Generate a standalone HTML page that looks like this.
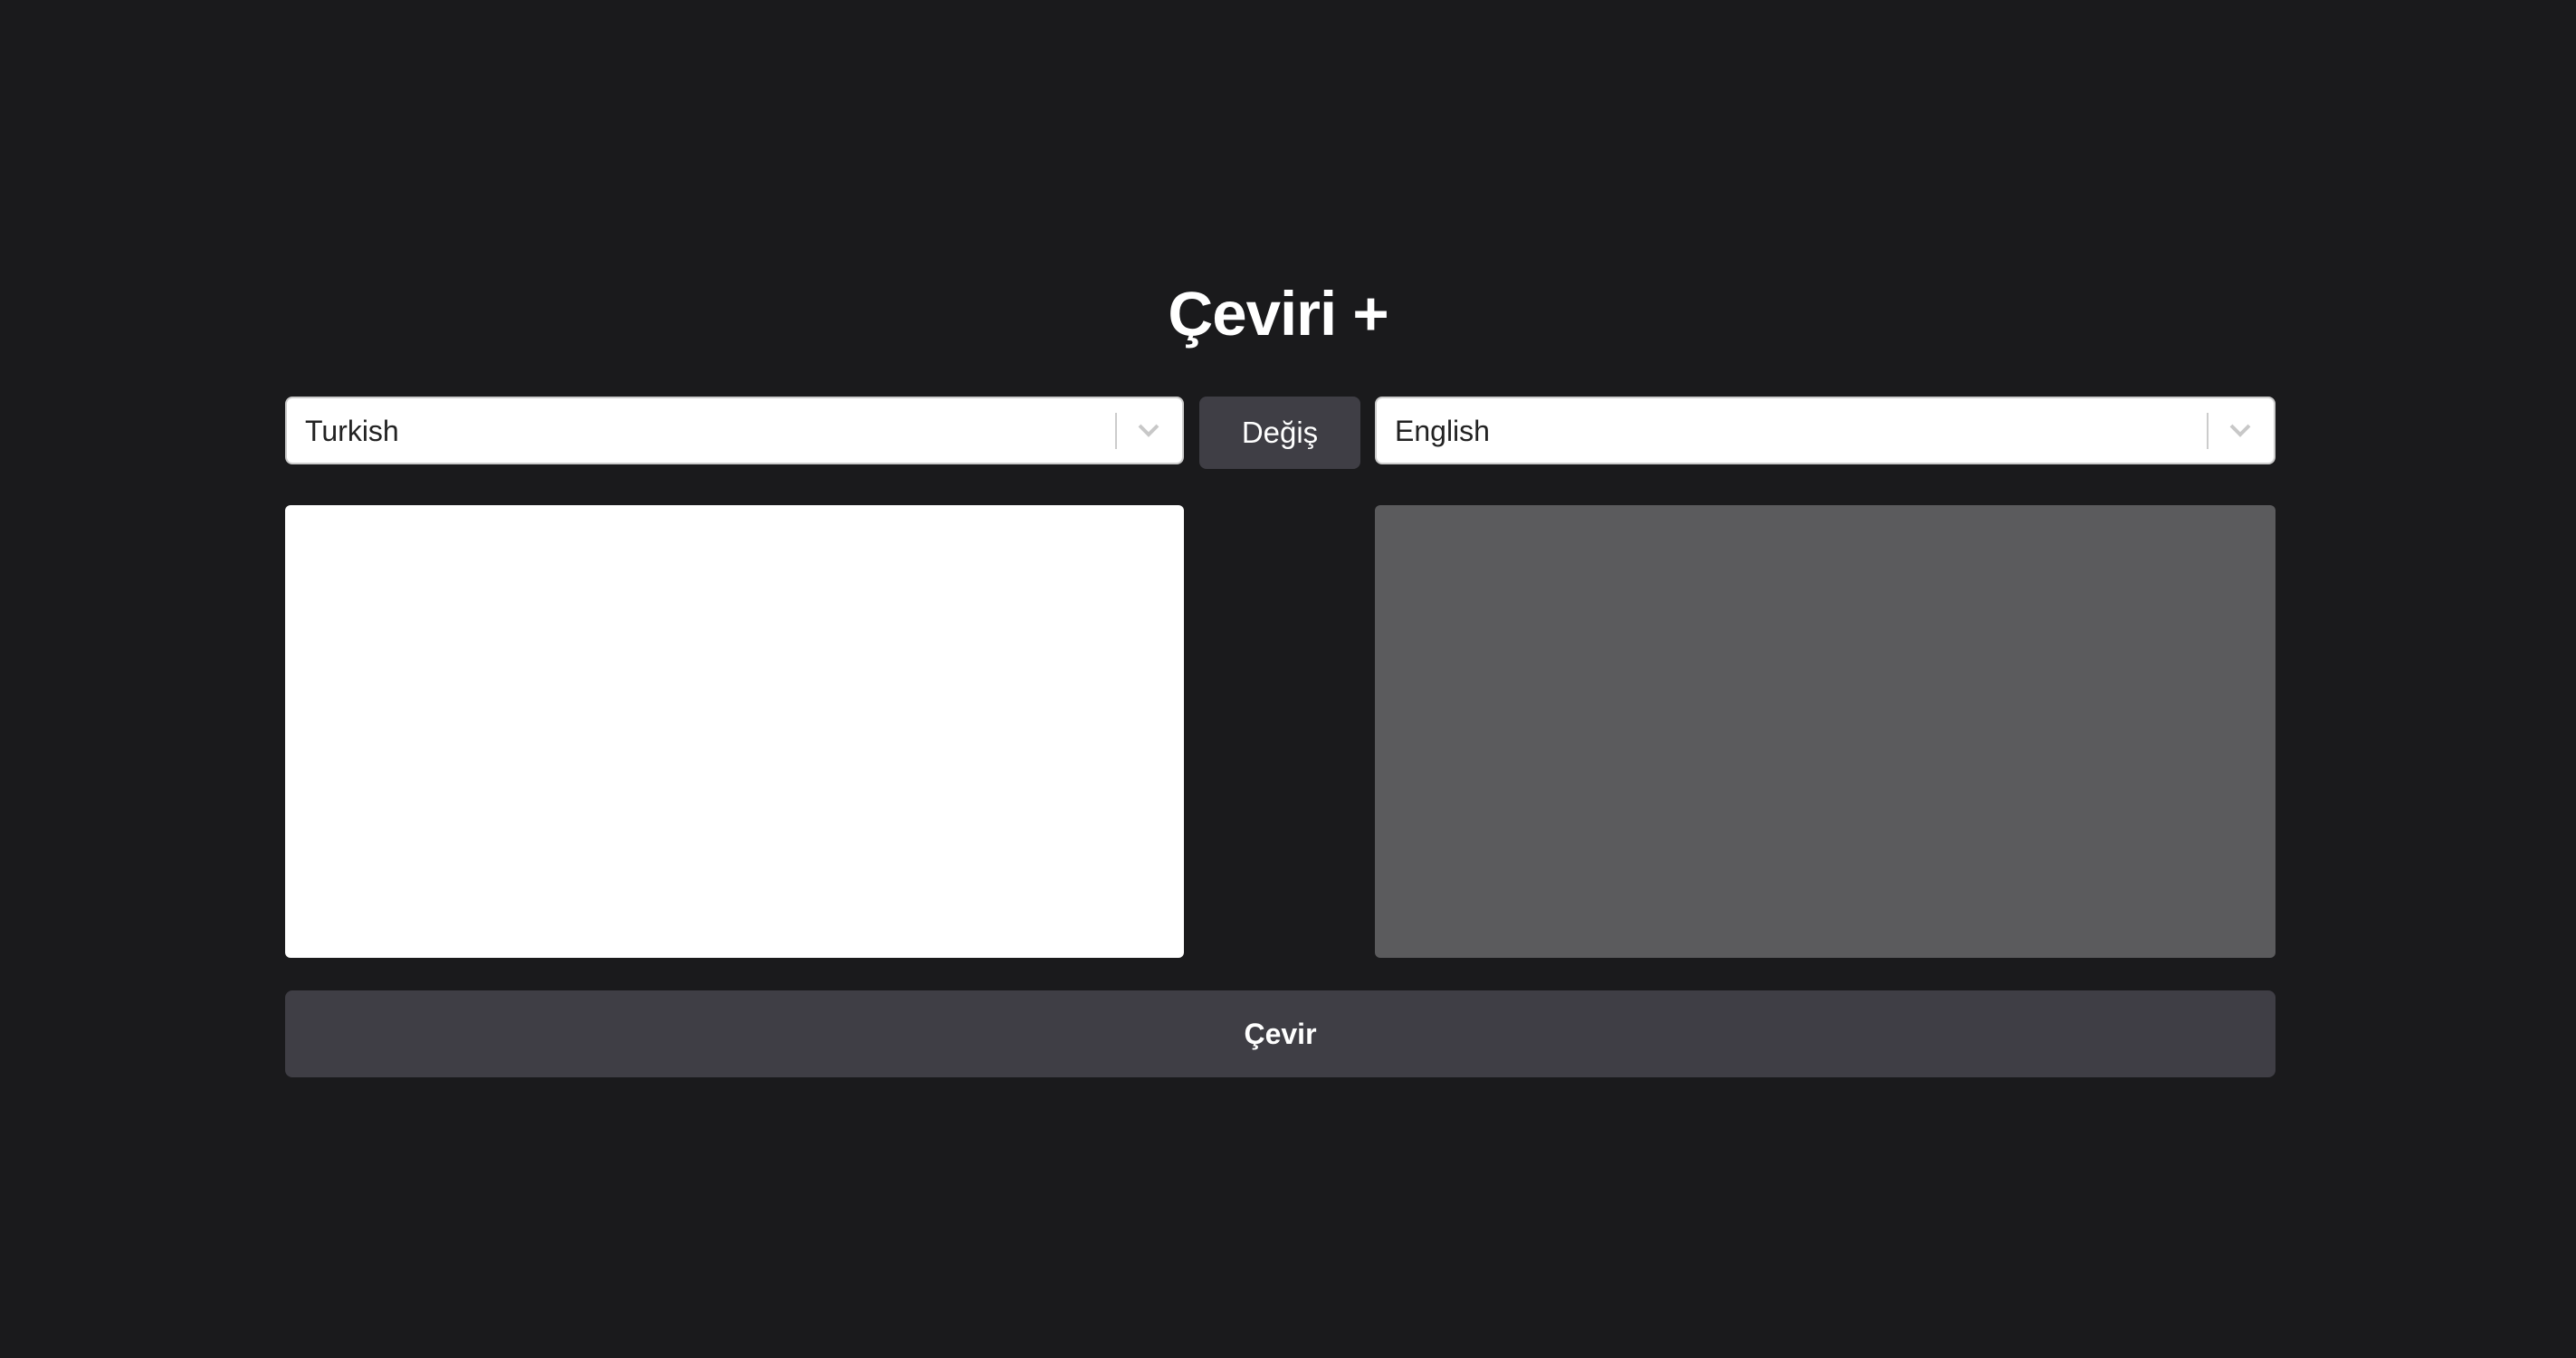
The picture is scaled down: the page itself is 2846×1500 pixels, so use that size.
<!DOCTYPE html>
<html><head><meta charset="utf-8"><style>
html,body{margin:0;padding:0;background:#1a1a1c;width:2846px;height:1500px;overflow:hidden;font-family:"Liberation Sans",sans-serif;}
.abs{position:absolute;box-sizing:border-box}
h1{position:absolute;left:-11px;width:2846px;top:302px;margin:0;text-align:center;color:#fff;font-size:69px;font-weight:bold;line-height:90px;letter-spacing:-1px}
.sel{background:#fff;border:2px solid #ccc;border-radius:8px;top:438px;height:75px}
.sel span{position:absolute;left:20px;top:18px;font-size:32px;color:#222;line-height:36px}
.sep{position:absolute;width:2px;height:40px;background:#ccc;top:16px}
.btn{background:#3f3e45;color:#fff;border-radius:8px;text-align:center}
</style></head><body>
<h1>Çeviri +</h1>
<div class="abs sel" style="left:315px;width:993px"><span>Turkish</span><div class="sep" style="right:72px"></div>
<svg style="position:absolute;right:24px;top:27px" width="26" height="16" viewBox="0 0 26 16"><path d="M3 3l10 10 10-10" fill="none" stroke="#c8c8c8" stroke-width="4"/></svg></div>
<div class="abs btn" style="left:1325px;top:438px;width:178px;height:80px;font-size:33px;line-height:80px">Değiş</div>
<div class="abs sel" style="left:1519px;width:995px"><span>English</span><div class="sep" style="right:72px"></div>
<svg style="position:absolute;right:24px;top:27px" width="26" height="16" viewBox="0 0 26 16"><path d="M3 3l10 10 10-10" fill="none" stroke="#c8c8c8" stroke-width="4"/></svg></div>
<div class="abs" style="left:315px;top:558px;width:993px;height:500px;background:#fff;border-radius:6px"></div>
<div class="abs" style="left:1519px;top:558px;width:995px;height:500px;background:#5b5b5d;border-radius:6px"></div>
<div class="abs btn" style="left:315px;top:1094px;width:2199px;height:96px;font-size:32px;font-weight:bold;line-height:96px">Çevir</div>
</body></html>
